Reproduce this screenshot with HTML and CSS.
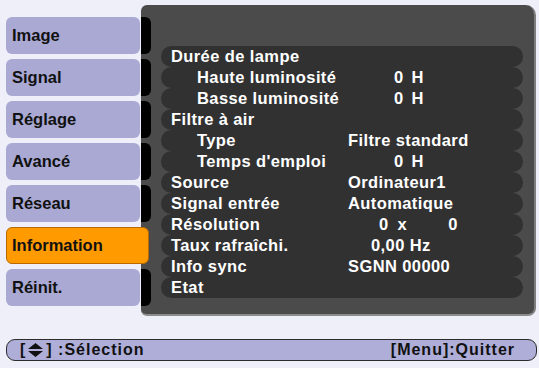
FILE: index.html
```html
<!DOCTYPE html>
<html lang="fr">
<head>
    <meta charset="UTF-8">
    <title>Information</title>
    <link rel="stylesheet" href="styles.css">
</head>
<body>

<div class="screen">
    <div class="main">
        <div class="tabs">
            <div class="tab">Image</div>
            <div class="tab">Signal</div>
            <div class="tab">Réglage</div>
            <div class="tab">Avancé</div>
            <div class="tab">Réseau</div>
            <div class="tab active">Information</div>
            <div class="tab">Réinit.</div>
        </div>

        <div class="panel">
            <div class="rows">
                <div class="row"><span>Durée de lampe</span><span></span></div>
                <div class="row sub"><span>Haute luminosité</span><span class="hours">0 H</span></div>
                <div class="row sub"><span>Basse luminosité</span><span class="hours">0 H</span></div>
                <div class="row"><span>Filtre à air</span><span></span></div>
                <div class="row sub"><span>Type</span><span>Filtre standard</span></div>
                <div class="row sub"><span>Temps d'emploi</span><span class="hours">0 H</span></div>
                <div class="row"><span>Source</span><span>Ordinateur1</span></div>
                <div class="row"><span>Signal entrée</span><span>Automatique</span></div>
                <div class="row"><span>Résolution</span><span class="res"><b>0</b><b>x</b><b>0</b></span></div>
                <div class="row"><span>Taux rafraîchi.</span><span class="rate">0,00 Hz</span></div>
                <div class="row"><span>Info sync</span><span>SGNN 00000</span></div>
                <div class="row"><span>Etat</span><span></span></div>
            </div>
        </div>
    </div>

    <div class="hint">
        <span class="select">[<svg class="updown" width="15" height="14" viewBox="0 0 15 14"><path d="M7.5 0 L15 6 L0 6 Z M0 8 L15 8 L7.5 14 Z" fill="#111"/></svg>] :Sélection</span>
        <span>[Menu]:Quitter</span>
    </div>
</div>

</body>
</html>
```

FILE: styles.css
```css
body {
    margin: 0;
    background: #efeff9;
    font-family: "Liberation Sans", Arial, sans-serif;
    font-weight: bold;
}

.screen {
    width: 539px;
    height: 368px;
    padding: 5px 3px 0 6px;
    box-sizing: border-box;
}

.main {
    display: flex;
    height: 311px;
}

.tabs {
    width: 135px;
    padding-top: 12px;
    display: flex;
    flex-direction: column;
    gap: 5px;
    flex-shrink: 0;
}

.tab {
    position: relative;
    height: 37px;
    width: 134px;
    box-sizing: border-box;
    padding-left: 6px;
    display: flex;
    align-items: center;
    background: #a9a9d3;
    border-radius: 6px;
    color: #111;
    font-size: 16.5px;
}

/* black joint between a tab and the panel */
.tab::after {
    content: "";
    position: absolute;
    left: calc(100% + 1px);
    top: 0;
    width: 10px;
    height: 100%;
    background: #000;
    border-radius: 0 6px 6px 0;
    z-index: 1;
}

.tab.active {
    width: 143px;
    background: #ff9a00;
    border: 1px solid #b86a00;
    padding-left: 5px;
    z-index: 2;
}

.tab.active::after {
    display: none;
}

.panel {
    flex: 1;
    background: #4b4b4b;
    border-radius: 6px 10px 8px 6px;
    border-right: 2px solid #7e7e7e;
    border-bottom: 2px solid #8c8c8c;
    padding: 41px 11px 0 20px;
}

.row {
    height: 21px;
    display: grid;
    grid-template-columns: 177px 1fr;
    align-items: center;
    padding-left: 10px;
    background: #313131;
    border-radius: 10.5px;
    color: #fff;
    font-size: 16.5px;
    letter-spacing: 0.4px;
    white-space: nowrap;
}

.row.sub {
    padding-left: 36px;
    grid-template-columns: 151px 1fr;
}

.hours {
    padding-left: 46px;
    word-spacing: 3px;
}

.rate {
    padding-left: 23px;
}

.res {
    display: flex;
    padding-left: 31px;
}

.res b:nth-child(2) {
    margin-left: 9px;
}

.res b:nth-child(3) {
    margin-left: 41px;
}

.hint {
    margin-top: 23px;
    height: 22px;
    width: 531px;
    box-sizing: border-box;
    border: 1px solid #2c2c2c;
    border-radius: 9px;
    background: #aeaed8;
    display: flex;
    justify-content: space-between;
    align-items: center;
    padding: 0 21px 0 13px;
    font-size: 16px;
    letter-spacing: 1px;
    color: #111;
}

.select {
    display: flex;
    align-items: center;
}

.updown {
    margin: 0 3px 0 2px;
}
```
